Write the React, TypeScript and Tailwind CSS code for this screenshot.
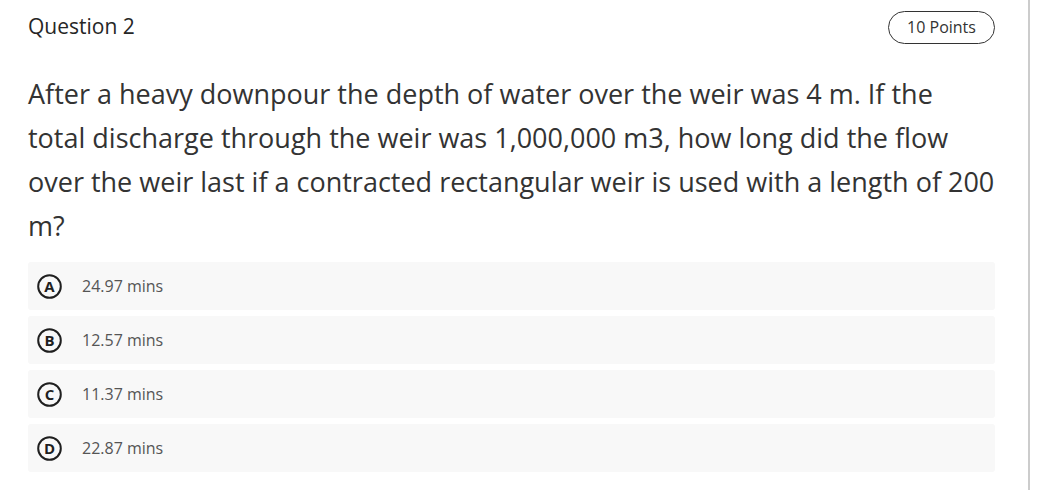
import React from "react";

const options = [
  { letter: "A", text: "24.97 mins" },
  { letter: "B", text: "12.57 mins" },
  { letter: "C", text: "11.37 mins" },
  { letter: "D", text: "22.87 mins" },
];

function Badge({ letter }: { letter: string }) {
  return (
    <svg width="25" height="25" viewBox="0 0 25 25" className="shrink-0">
      <circle cx="12.5" cy="12.5" r="11.3" fill="none" stroke="#1f1f1f" strokeWidth="2" />
      <text
        x="12.5"
        y="18"
        textAnchor="middle"
        fontSize="15"
        fontWeight="700"
        fill="#1f1f1f"
        fontFamily="Open Sans, sans-serif"
      >
        {letter}
      </text>
    </svg>
  );
}

export default function App() {
  return (
    <div
      className="flex h-[490px] w-[1040px] bg-white text-[#333333]"
      style={{ fontFamily: '"Open Sans", sans-serif' }}
    >
      <div className="w-[1028px] pl-[28px] pr-[33px]">
        <div className="flex h-[54px] items-center justify-between">
          <div className="text-[21px] text-[#262626]">Question 2</div>
          <div className="flex h-[33px] w-[107px] shrink-0 items-center justify-center rounded-full border border-[#333333] text-[16px] text-[#333333]">
            10 Points
          </div>
        </div>
        <div className="mt-[18px] text-[27px] leading-[44px] text-[#333333]">
          After a heavy downpour the depth of water over the weir was 4 m. If the total discharge through
          the weir was 1,000,000 m3, how long did the flow over the weir last if a contracted rectangular
          weir is used with a length of 200 m?
        </div>
        <div className="mt-[14px] flex flex-col gap-[6px]">
          {options.map((o) => (
            <div
              key={o.letter}
              className="flex h-[48px] items-center rounded-[3px] bg-[#f8f8f8] pl-[9px]"
            >
              <Badge letter={o.letter} />
              <span className="ml-[20px] text-[16px] text-[#555555]">{o.text}</span>
            </div>
          ))}
        </div>
      </div>
      <div className="h-full w-[2px] bg-[#cccccc]" />
    </div>
  );
}
